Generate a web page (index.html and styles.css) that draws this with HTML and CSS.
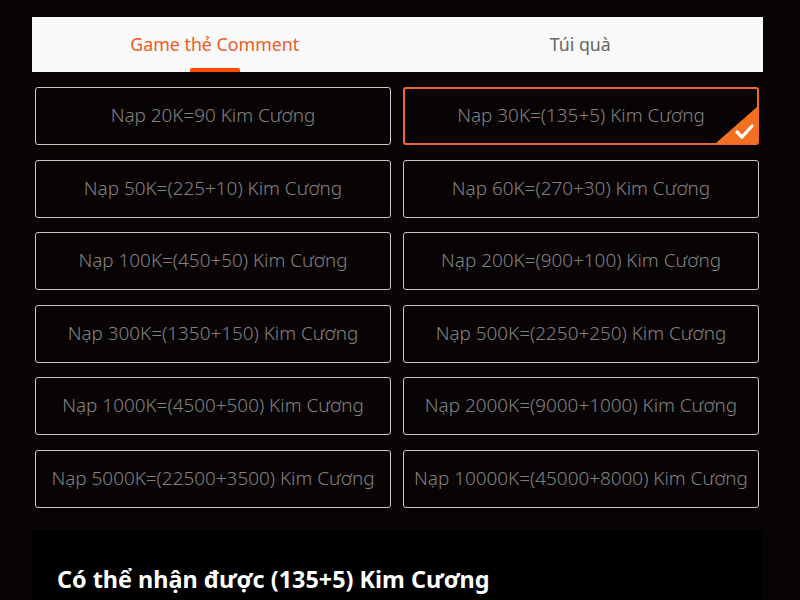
FILE: index.html
```html
<!DOCTYPE html>
<html lang="vi">
<head>
<meta charset="utf-8">
<link rel="stylesheet" href="styles.css">
</head>
<body>
<div class="wrap">
  <div class="tabs">
    <div class="tab active">Game thẻ Comment</div>
    <div class="tab">Túi quà</div>
  </div>
  <div class="grid">
    <div class="card">Nạp 20K=90 Kim Cương</div>
    <div class="card selected">Nạp 30K=(135+5) Kim Cương
      <span class="corner"><svg viewBox="0 0 41 36" width="41" height="36"><polygon points="41,0 41,36 0,36" fill="#f37021"/><polyline points="21,25 26,30 36,19" fill="none" stroke="#fff" stroke-width="3.2" stroke-linecap="round" stroke-linejoin="round"/></svg></span>
    </div>
    <div class="card">Nạp 50K=(225+10) Kim Cương</div>
    <div class="card">Nạp 60K=(270+30) Kim Cương</div>
    <div class="card">Nạp 100K=(450+50) Kim Cương</div>
    <div class="card">Nạp 200K=(900+100) Kim Cương</div>
    <div class="card">Nạp 300K=(1350+150) Kim Cương</div>
    <div class="card">Nạp 500K=(2250+250) Kim Cương</div>
    <div class="card">Nạp 1000K=(4500+500) Kim Cương</div>
    <div class="card">Nạp 2000K=(9000+1000) Kim Cương</div>
    <div class="card">Nạp 5000K=(22500+3500) Kim Cương</div>
    <div class="card">Nạp 10000K=(45000+8000) Kim Cương</div>
  </div>
  <div class="result">
    <h2 class="result-title">Có thể nhận được (135+5) Kim Cương</h2>
  </div>
</div>
</body>
</html>
```
FILE: styles.css
```css
html, body {
  margin: 0;
  padding: 0;
  background: #080405;
  height: 600px;
  overflow: hidden;
}
body {
  font-family: "Noto Sans", "Open Sans", sans-serif;
}
.wrap {
  width: 731px;
  margin-left: 32px;
  padding-top: 17px;
}
.tabs {
  display: flex;
  height: 55px;
  background: #f9f9f9;
}
.tab {
  flex: 1;
  position: relative;
  display: flex;
  align-items: center;
  justify-content: center;
  font-size: 17.8px;
  color: #666;
  padding-bottom: 2px;
  box-sizing: border-box;
}
.tab.active {
  color: #f05a22;
}
.tab.active::after {
  content: "";
  position: absolute;
  left: 50%;
  bottom: 0;
  width: 50px;
  height: 4px;
  margin-left: -25px;
  background: #ff4c00;
  border-radius: 2px 2px 0 0;
}
.grid {
  display: grid;
  grid-template-columns: 1fr 1fr;
  column-gap: 12px;
  row-gap: 14.6px;
  margin: 15px 4px 0 3px;
}
.card {
  position: relative;
  height: 58px;
  box-sizing: border-box;
  border: 1px solid #c8c8c8;
  border-radius: 3px;
  display: flex;
  align-items: center;
  justify-content: center;
  color: #828282;
  font-size: 18.9px;
  font-weight: 300;
  white-space: nowrap;
  overflow: hidden;
  padding-bottom: 2px;
}
.card.selected {
  border: 2px solid #f26b2a;
}
.corner {
  position: absolute;
  right: 0;
  bottom: 0;
  width: 41px;
  height: 36px;
  line-height: 0;
}
.result {
  margin-top: 22px;
  background: #000;
  height: 100px;
  padding: 33px 25px 0;
  box-sizing: border-box;
}
.result-title {
  margin: 0;
  color: #fff;
  font-size: 23.4px;
  font-weight: 700;
}
```
